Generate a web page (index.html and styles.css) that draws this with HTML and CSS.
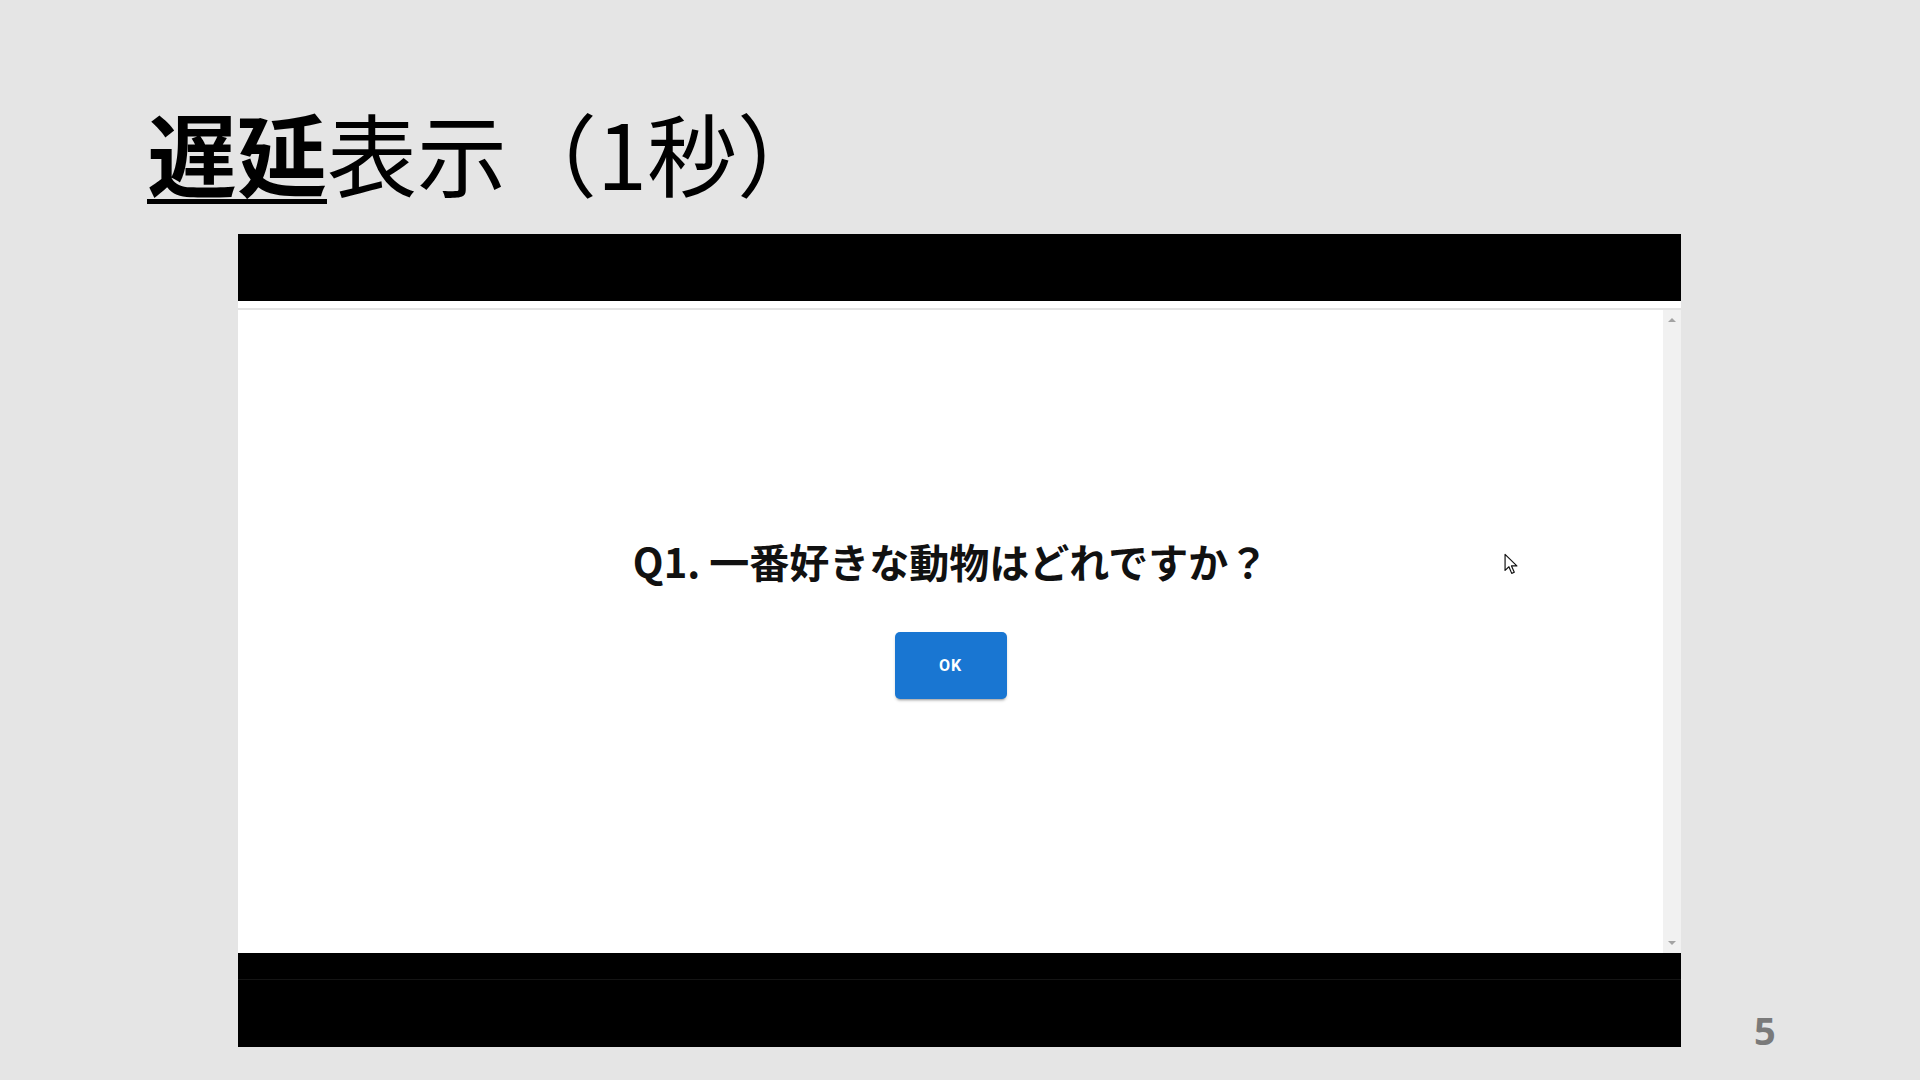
FILE: index.html
```html
<!DOCTYPE html>
<html lang="ja">
<head>
<meta charset="utf-8">
<title>遅延表示（1秒）</title>
<link rel="stylesheet" href="styles.css">
</head>
<body>
<div class="slide">
  <h1 class="title"><span class="title-strong">遅延</span>表示（1秒）</h1>
  <div class="stage">
    <div class="video">
      <div class="bar-top"></div>
      <div class="browser">
        <div class="browser-gap"></div>
        <div class="viewport">
          <div class="page">
            <p class="question">Q1. 一番好きな動物はどれですか？</p>
            <button class="ok-btn" type="button">OK</button>
            <svg class="cursor" width="15" height="23" viewBox="0 0 14 21">
              <path d="M1 1 L1 16 L4.6 12.6 L7.2 18.8 L9.6 17.8 L7 11.8 L12 11.8 Z" fill="#fff" stroke="#111" stroke-width="1.1" stroke-linejoin="round"/>
            </svg>
          </div>
          <div class="scrollbar">
            <span class="arrow-up"></span>
            <span class="arrow-down"></span>
          </div>
        </div>
      </div>
      <div class="bar-bottom"><div class="bar-line"></div></div>
    </div>
    <div class="page-num">5</div>
  </div>
</div>
</body>
</html>
```

FILE: styles.css
```css
html, body {
  margin: 0;
  padding: 0;
}
body {
  background: #e5e5e5;
  width: 1920px;
  height: 1080px;
  overflow: hidden;
  font-family: "Noto Sans CJK JP", "Noto Sans", sans-serif;
}
.slide {
  display: flex;
  flex-direction: column;
  padding-top: 106px;
}
.title {
  margin: 0 0 38px 147px;
  font-size: 90px;
  line-height: 90px;
  font-weight: 400;
  color: #000;
  white-space: nowrap;
}
.title-strong {
  font-weight: 700;
  text-decoration: underline;
  text-decoration-thickness: 5px;
  text-underline-offset: 9px;
}
.stage {
  display: flex;
  align-items: flex-end;
  padding-left: 238px;
}
.video {
  width: 1443px;
  height: 813px;
  display: flex;
  flex-direction: column;
  background: #000;
}
.bar-top {
  height: 67px;
  background: #000;
}
.browser {
  height: 652px;
  display: flex;
  flex-direction: column;
  background: #fff;
}
.browser-gap {
  height: 7px;
  border-bottom: 2px solid #e3e3e3;
}
.viewport {
  flex: 1;
  display: flex;
}
.page {
  flex: 1;
  position: relative;
  display: flex;
  flex-direction: column;
  align-items: center;
  padding-top: 227px;
}
.question {
  margin: 0;
  font-size: 40px;
  line-height: 48px;
  font-weight: 700;
  color: #111;
  white-space: nowrap;
}
.ok-btn {
  margin-top: 47px;
  width: 112px;
  height: 67px;
  border: 0;
  border-radius: 5px;
  background: #1976d2;
  color: #fff;
  font-family: Roboto, "Noto Sans", sans-serif;
  font-weight: 700;
  font-size: 16px;
  letter-spacing: 1px;
  box-shadow: 0 3px 2px -2px rgba(0,0,0,0.25), 0 2px 3px rgba(0,0,0,0.15);
}
.cursor {
  position: absolute;
  left: 1266px;
  top: 243px;
}
.scrollbar {
  width: 18px;
  background: #f1f1f1;
  display: flex;
  flex-direction: column;
  justify-content: space-between;
  align-items: center;
  padding: 8px 0 8px;
}
.arrow-up {
  width: 0;
  height: 0;
  border-left: 4px solid transparent;
  border-right: 4px solid transparent;
  border-bottom: 4px solid #a3a3a3;
}
.arrow-down {
  width: 0;
  height: 0;
  border-left: 4px solid transparent;
  border-right: 4px solid transparent;
  border-top: 4px solid #a3a3a3;
}
.bar-bottom {
  flex: 1;
  background: #000;
  padding-top: 26px;
}
.bar-line {
  height: 1px;
  background: #141414;
}
.page-num {
  margin-left: 73px;
  margin-bottom: -9px;
  font-family: "Open Sans", "Noto Sans", sans-serif;
  font-weight: 700;
  font-size: 38px;
  color: #7a7a7a;
  line-height: 52px;
}
```
